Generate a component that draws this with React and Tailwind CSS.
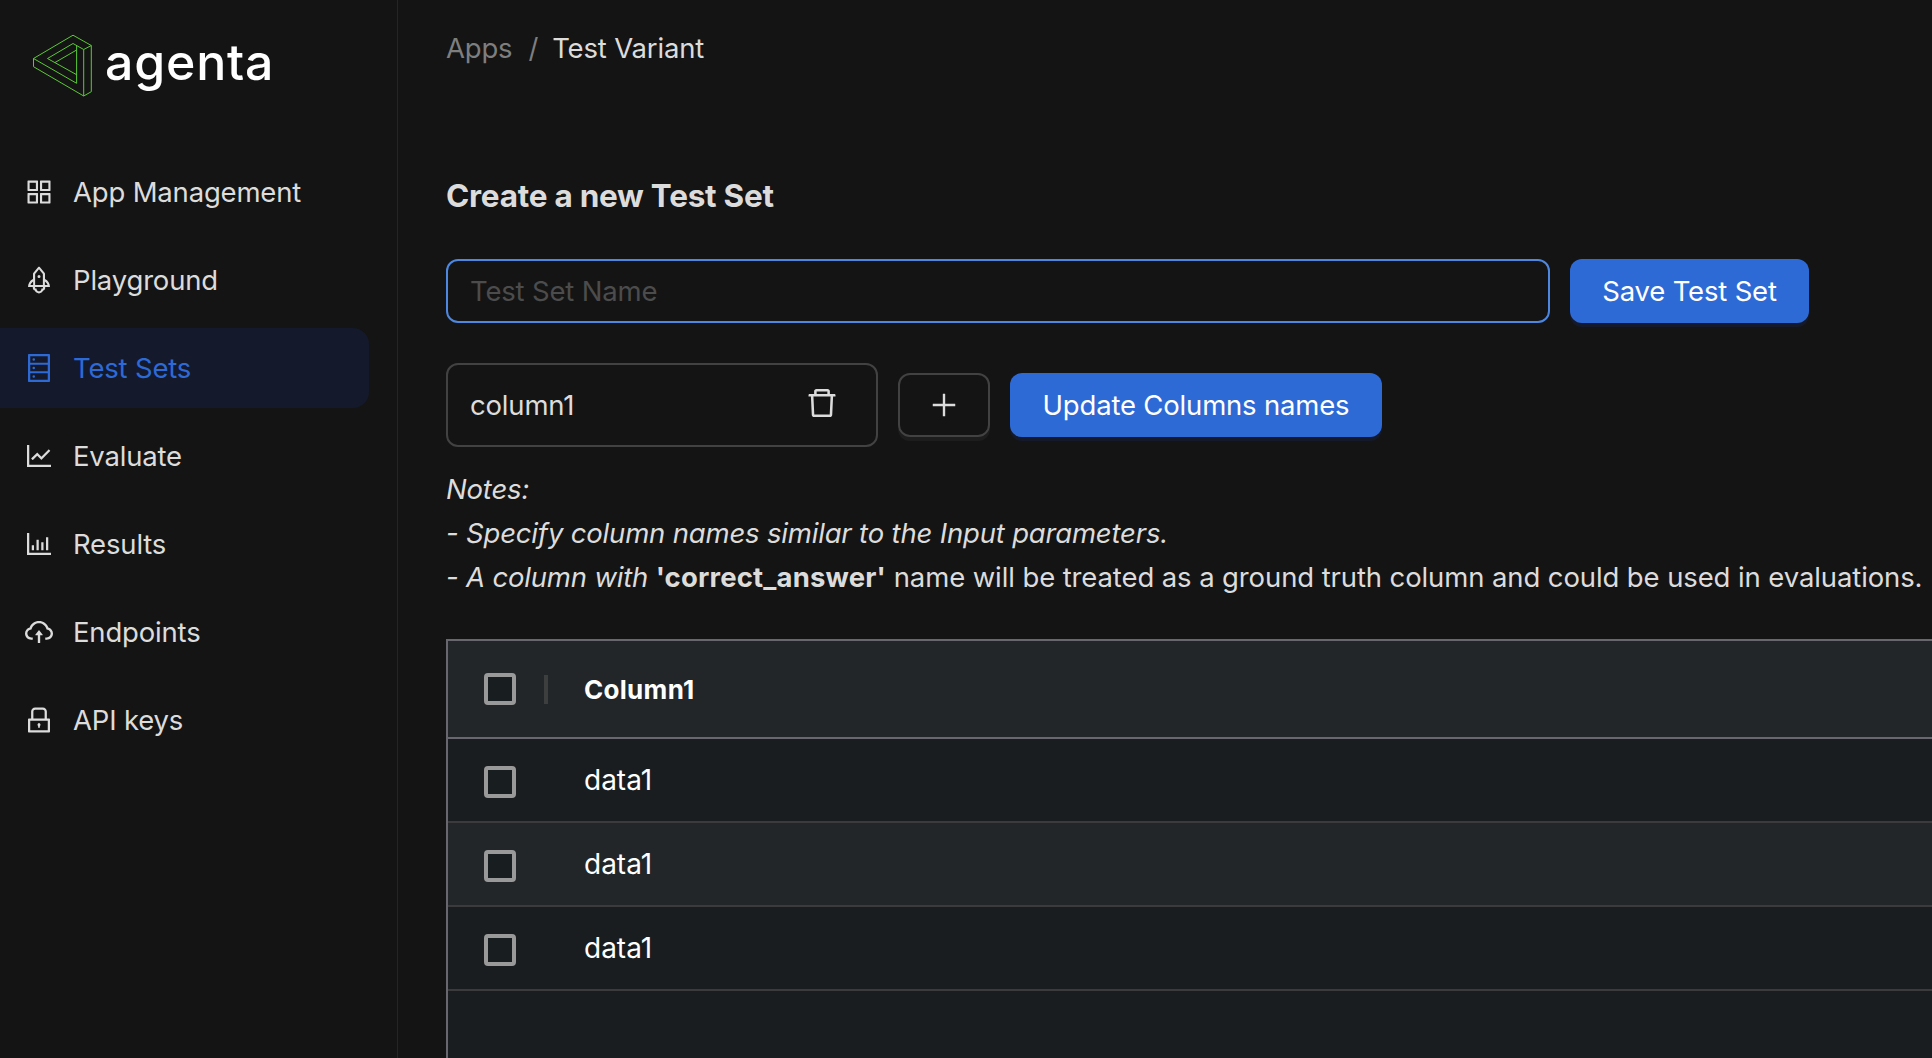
import {
  AiOutlineAppstore, AiOutlineRocket, AiOutlineDatabase, AiOutlineLineChart, AiOutlineBarChart,
  AiOutlineCloudUpload, AiOutlineLock, AiOutlineDelete, AiOutlinePlus,
} from "react-icons/ai";

const NAV = [
  { label: "App Management", Icon: AiOutlineAppstore },
  { label: "Playground", Icon: AiOutlineRocket },
  { label: "Test Sets", Icon: AiOutlineDatabase, active: true },
  { label: "Evaluate", Icon: AiOutlineLineChart },
  { label: "Results", Icon: AiOutlineBarChart },
  { label: "Endpoints", Icon: AiOutlineCloudUpload },
  { label: "API keys", Icon: AiOutlineLock },
];

function Logo() {
  return (
    <div className="flex h-[64px] items-start pl-8">
      <svg width="62" height="64" viewBox="0 0 62 64" fill="none" stroke="#5acb35" strokeWidth="1" strokeLinejoin="round">
        <path d="M1.5 24.500 41 1.200 59.300 11.500V57.700L51.700 62 1.500 32.700ZM1.500 24.500 44.600 49.300V12M51.700 15.500 41 9.500 15.500 24.500 44.600 40.700M23 28.500 44.600 16M51.700 15.500 59.300 11.500M51.700 15.500V62" />
      </svg>
      <span className="ml-[11px] mt-[-6px] text-[50px] font-medium leading-[68px] tracking-[0.8px] text-white">agenta</span>
    </div>
  );
}

function Sidebar() {
  return (
    <aside className="flex w-[398px] shrink-0 flex-col border-r border-[#252525] pt-[34px]">
      <Logo />
      <nav className="mt-[54px] flex flex-col gap-2 pr-7">
        {NAV.map(({ label, Icon, active }) => (
          <a
            key={label}
            className={
              active
                ? "flex h-20 items-center gap-[18px] rounded-r-2xl bg-[#141a2b] pl-[23px] text-[#2e6ad6]"
                : "flex h-20 items-center gap-[18px] pl-[23px]"
            }
          >
            <Icon size={32} />
            <span>{label}</span>
          </a>
        ))}
      </nav>
    </aside>
  );
}

function Checkbox() {
  return <span className="block size-8 rounded-[4px] border-4 border-[#999999] bg-[#181d1f]" />;
}

function Table() {
  return (
    <div className="mt-[40px] flex flex-1 flex-col border-l-2 border-t-2 border-[#68666e] bg-[#1a1d20] text-[28px] tracking-normal text-white">
      <div className="flex h-[98px] shrink-0 items-center border-b-2 border-[#68666e] bg-[#222628] pl-9">
        <Checkbox />
        <span className="ml-7 h-[29px] w-1 bg-[#3d3e3e]" />
        <span className="ml-9 pt-[2px] text-[26px] font-bold tracking-[0.3px]">Column1</span>
      </div>
      {["bg-[#1a1d20]", "bg-[#222628]", "bg-[#1a1d20]"].map((bg, i) => (
        <div key={i} className={"flex h-[84px] shrink-0 items-center border-b-2 border-[#3b3b3b] pl-9 " + bg}>
          <div className="pt-[4px]"><Checkbox /></div>
          <span className="ml-[68px]">data1</span>
        </div>
      ))}
    </div>
  );
}

export default function App() {
  return (
    <div className="flex h-[1058px] w-[1932px] overflow-hidden bg-[#141414] font-[Inter,sans-serif] text-[27.5px] leading-[44px] tracking-[-0.18px] text-[#dcdcdc]">
      <Sidebar />
      <main className="flex min-w-0 flex-1 flex-col pl-12 pt-[26px]">
        <div className="flex">
          <span className="text-[#7e7e7e]">Apps</span>
          <span className="ml-4 mr-3.5 text-[#7e7e7e]">/</span>
          <span>Test Variant</span>
        </div>
        <h1 className="mt-[104px] text-[31.5px] font-bold leading-[44px] tracking-[-0.25px]">Create a new Test Set</h1>
        <div className="mt-[41px] flex gap-5">
          <input
            placeholder="Test Set Name"
            className="h-16 w-[1104px] rounded-xl border-2 border-[#4d87e0] px-[22px] outline-none placeholder:text-[#4c4c4c]"
          />
          <button className="h-16 w-[239px] rounded-xl bg-[#2e6ad6] text-white shadow-[0_4px_0_#141a2c]">Save Test Set</button>
        </div>
        <div className="mt-10 flex items-center gap-5">
          <div className="flex h-[84px] w-[432px] items-center justify-between rounded-xl border-2 border-[#424242] pl-[22px] pr-9">
            <span>column1</span>
            <AiOutlineDelete size={36} className="mb-1" />
          </div>
          <button className="flex h-16 w-[92px] items-center justify-center rounded-xl border-2 border-[#424242] shadow-[0_4px_0_#1d1d1d]">
            <AiOutlinePlus size={32} />
          </button>
          <button className="h-16 w-[372px] rounded-xl bg-[#2e6ad6] text-white shadow-[0_4px_0_#141a2c]">Update Columns names</button>
        </div>
        <div className="mt-[20px] whitespace-nowrap">
          <p className="italic">Notes:</p>
          <p className="italic">- Specify column names similar to the Input parameters.</p>
          <p className="tracking-[-0.11px]">
            <span className="italic tracking-[-0.18px]">- A column with </span>
            <b className="font-bold tracking-[0.16px]">'correct_answer'</b> name will be treated as a ground truth column and could be used in evaluations.
          </p>
        </div>
        <Table />
      </main>
    </div>
  );
}
